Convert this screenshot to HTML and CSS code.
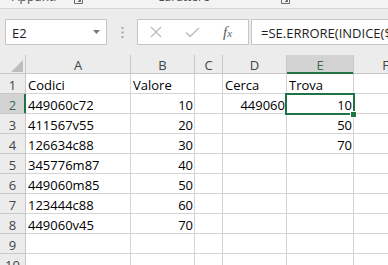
FILE: index.html
```html
<!DOCTYPE html>
<html lang="it">
<head>
    <meta charset="UTF-8">
    <meta name="viewport" content="width=device-width, initial-scale=1.0">
    <title>Cerca e Trova</title>
    <link rel="stylesheet" href="styles.css">
</head>
<body>

    <!-- Ribbon group labels (cut off at the top) -->
    <div class="ribbon">
        <span class="group-label label-clip">Appunti</span>
        <svg class="launcher" width="9" height="9" viewBox="0 0 9 9"><path d="M0.5 0.5V8.5H8.5V0.5M3 3L6.5 6.5M6.5 4V6.5H4" fill="none" stroke="#6a6a6a" stroke-width="1"/></svg>
        <span class="group-label label-font">Carattere</span>
        <svg class="launcher" width="9" height="9" viewBox="0 0 9 9"><path d="M0.5 0.5V8.5H8.5V0.5M3 3L6.5 6.5M6.5 4V6.5H4" fill="none" stroke="#6a6a6a" stroke-width="1"/></svg>
    </div>

    <!-- Name box and formula bar -->
    <div class="formula-row">
        <div class="name-box">
            <span class="name-text">E2</span>
            <svg class="drop" width="7" height="4" viewBox="0 0 7 4"><path d="M0 0H7L3.5 4Z" fill="#7a7a7a"/></svg>
        </div>
        <svg class="grip" width="3" height="11" viewBox="0 0 3 11"><rect x="0.5" y="0" width="2" height="2" fill="#a6a6a6"/><rect x="0.5" y="4.5" width="2" height="2" fill="#a6a6a6"/><rect x="0.5" y="9" width="2" height="2" fill="#a6a6a6"/></svg>
        <div class="fx-box">
            <svg class="cancel" width="12" height="12" viewBox="0 0 12 12"><path d="M1 1L11 11M11 1L1 11" stroke="#bcbcbc" stroke-width="1.3"/></svg>
            <svg class="enter" width="15" height="11" viewBox="0 0 15 11"><path d="M1 5.5L5 9.5L14 1" fill="none" stroke="#bcbcbc" stroke-width="1.3"/></svg>
            <span class="fx">f<span class="fx-x">x</span></span>
        </div>
        <div class="formula">=SE.ERRORE(INDICE($B$2:$B$8;AGGREGA(15;6;RIF.RIGA($A$2:$A$8)-1/VAL.NUMERO(RICERCA($D$2;$A$2:$A$8));RIGHE($E$2:E2)));"")</div>
    </div>

    <!-- Worksheet -->
    <div class="sheet">
        <div class="corner"><span class="select-all"></span></div>
        <div class="ch">A</div><div class="ch">B</div><div class="ch">C</div><div class="ch">D</div><div class="ch ch-on">E</div><div class="ch">F</div>

        <div class="rh">1</div><div class="c">Codici</div><div class="c">Valore</div><div class="c"></div><div class="c">Cerca</div><div class="c">Trova</div><div class="c"></div>
        <div class="rh rh-on">2</div><div class="c">449060c72</div><div class="c num">10</div><div class="c"></div><div class="c num">449060</div><div class="c num">10</div><div class="c"></div>
        <div class="rh">3</div><div class="c">411567v55</div><div class="c num">20</div><div class="c"></div><div class="c"></div><div class="c num">50</div><div class="c"></div>
        <div class="rh">4</div><div class="c">126634c88</div><div class="c num">30</div><div class="c"></div><div class="c"></div><div class="c num">70</div><div class="c"></div>
        <div class="rh">5</div><div class="c">345776m87</div><div class="c num">40</div><div class="c"></div><div class="c"></div><div class="c"></div><div class="c"></div>
        <div class="rh">6</div><div class="c">449060m85</div><div class="c num">50</div><div class="c"></div><div class="c"></div><div class="c"></div><div class="c"></div>
        <div class="rh">7</div><div class="c">123444c88</div><div class="c num">60</div><div class="c"></div><div class="c"></div><div class="c"></div><div class="c"></div>
        <div class="rh">8</div><div class="c">449060v45</div><div class="c num">70</div><div class="c"></div><div class="c"></div><div class="c"></div><div class="c"></div>
        <div class="rh">9</div><div class="c"></div><div class="c"></div><div class="c"></div><div class="c"></div><div class="c"></div><div class="c"></div>
        <div class="rh">10</div><div class="c"></div><div class="c"></div><div class="c"></div><div class="c"></div><div class="c"></div><div class="c"></div>

        <!-- active cell E2 -->
        <div class="selection"><span class="fill-handle"></span></div>
    </div>

</body>
</html>
```

FILE: styles.css
```css
body {
    margin: 0;
    width: 388px;
    height: 265px;
    overflow: hidden;
    background: #ffffff;
    font-family: "Open Sans", "Liberation Sans", sans-serif;
}

/* ribbon tail */
.ribbon {
    display: flex;
    align-items: flex-start;
    height: 8px;
    background: #f3f3f3;
    border-bottom: 1px solid #d6d6d6;
    overflow: hidden;
    color: #4a4a4a;
    font-size: 12px;
    line-height: 12px;
    white-space: nowrap;
}
.group-label {
    display: block;
    margin-top: -9px;
}
.label-clip {
    width: 62px;
    margin-left: 12px;
}
.label-font {
    width: 124px;
    margin-left: 74px;
}
.launcher {
    flex: none;
    margin-top: -5px;
}

/* formula bar */
.formula-row {
    display: flex;
    align-items: flex-start;
    height: 46px;
    box-sizing: border-box;
    padding-top: 10px;
    background: #ececec;
    white-space: nowrap;
    font-size: 13px;
    color: #1e1e1e;
}
.name-box {
    display: flex;
    justify-content: space-between;
    flex: none;
    box-sizing: border-box;
    width: 102px;
    height: 26px;
    margin-left: 5px;
    padding: 2px 6px 0 6px;
    background: #ffffff;
    border: 1px solid #c6c6c6;
}
.name-text {
    line-height: 22px;
}
.drop {
    align-self: center;
    margin-top: -3px;
}
.grip {
    flex: none;
    margin: 8px 0 0 14px;
}
.fx-box {
    display: flex;
    align-items: center;
    flex: none;
    box-sizing: border-box;
    width: 112px;
    height: 26px;
    margin-left: 13px;
    padding-left: 12px;
    background: #ffffff;
    border: 1px solid #c6c6c6;
}
.enter {
    margin-left: 23px;
}
.fx {
    margin-left: 23px;
    font-family: "Liberation Serif", serif;
    font-style: italic;
    font-size: 15px;
    color: #5c5c5c;
}
.fx-x {
    font-size: 11px;
}
.formula {
    flex: none;
    box-sizing: border-box;
    width: 600px;
    height: 26px;
    margin-left: 2px;
    padding: 2px 0 0 9px;
    line-height: 22px;
    background: #ffffff;
    border: 1px solid #c6c6c6;
    overflow: hidden;
}

/* grid */
.sheet {
    position: relative;
    display: grid;
    grid-template-columns: 26px 105px 64px 28px 64px 67px 64px;
    grid-template-rows: 19px;
    grid-auto-rows: 20px;
    font-size: 13px;
    line-height: 16px;
    color: #000000;
}
.c {
    display: flex;
    align-items: flex-end;
    box-sizing: border-box;
    padding-left: 2px;
    border-right: 1px solid #d4d4d4;
    border-bottom: 1px solid #d4d4d4;
    white-space: nowrap;
}
.num {
    justify-content: flex-end;
    padding-left: 0;
    padding-right: 1px;
}
.corner,
.ch,
.rh {
    display: flex;
    align-items: flex-end;
    justify-content: center;
    box-sizing: border-box;
    background: #ececec;
    border-right: 1px solid #c8c8c8;
    border-bottom: 1px solid #c8c8c8;
    color: #444444;
}
.corner {
    justify-content: flex-end;
}
.select-all {
    width: 0;
    height: 0;
    margin: 0 2px 1px 0;
    border-left: 12px solid transparent;
    border-bottom: 12px solid #bdbdbd;
}
.ch-on {
    background: #d3d3d3;
    color: #3d6a4f;
    border-bottom-color: #217346;
    box-shadow: inset 0 -1px 0 #217346;
}
.rh-on {
    background: #d3d3d3;
    color: #3d6a4f;
    border-right-color: #217346;
    box-shadow: inset -1px 0 0 #217346;
}
.selection {
    position: absolute;
    left: 285px;
    top: 38px;
    width: 70px;
    height: 22px;
    box-sizing: border-box;
    border: 2px solid #217346;
}
.fill-handle {
    position: absolute;
    left: 63px;
    top: 16px;
    width: 7px;
    height: 7px;
    box-sizing: border-box;
    background: #217346;
    border: 1px solid #ffffff;
}
```
